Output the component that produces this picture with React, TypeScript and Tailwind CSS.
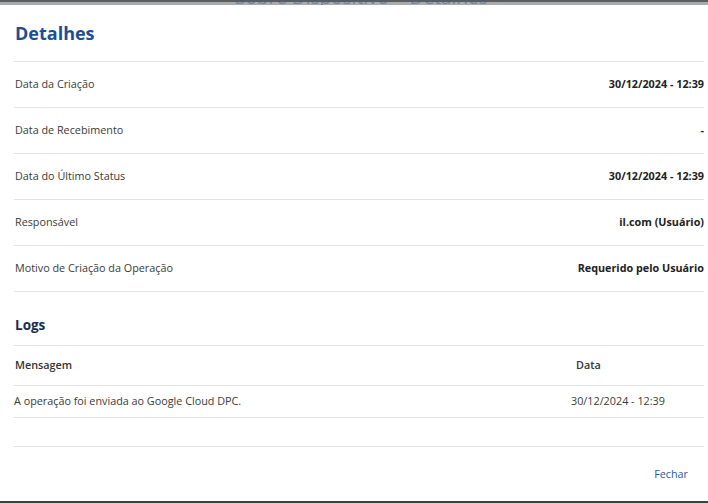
const rows: [string, string][] = [
  ["Data da Criação", "30/12/2024 - 12:39"],
  ["Data de Recebimento", "-"],
  ["Data do Último Status", "30/12/2024 - 12:39"],
  ["Responsável", "il.com (Usuário)"],
  ["Motivo de Criação da Operação", "Requerido pelo Usuário"],
];

export default function App() {
  return (
    <div
      className="flex h-[503px] w-[708px] flex-col overflow-hidden bg-[#3f4244] text-[#333]"
      style={{ fontFamily: '"Open Sans", "Noto Sans", sans-serif' }}
    >
      {/* backdrop strip above the dialog */}
      <div className="h-[2px] bg-[#5a5d60]" />
      <div className="relative h-[3px] overflow-hidden bg-[#a9abad]">
        <span className="absolute left-[235px] top-[-14px] whitespace-nowrap text-[19px] leading-none text-[#6f86a8]">
          Sobre Dispositivo &gt; Detalhes
        </span>
      </div>

      <div className="flex h-[496px] flex-col bg-white pl-[14px] pr-[4px]">
        <div className="flex h-[56px] items-center">
          <h1 className="pl-px text-[18px] font-bold text-[#1d4e93]">Detalhes</h1>
        </div>

        <div className="border-t border-[#e2e2e2]">
          {rows.map(([label, value]) => (
            <div
              key={label}
              className="flex h-[46px] items-center justify-between border-b border-[#e2e2e2] text-[10.8px]"
            >
              <span className="pl-px text-[#3a3a3a]">{label}</span>
              <span className="font-bold text-[#222]">{value}</span>
            </div>
          ))}
        </div>

        <div className="flex h-[53px] items-end pb-[10px]">
          <h2 className="pl-px text-[13.5px] font-bold leading-[19px] text-[#1b2d4f]">Logs</h2>
        </div>

        <div className="border-t border-[#e2e2e2] text-[10.8px]">
          <div className="flex h-[40px] items-center border-b border-[#e2e2e2] font-semibold text-[#333]">
            <span className="w-[557px] pl-px">Mensagem</span>
            <span className="pl-[5px]">Data</span>
          </div>
          <div className="flex h-[32px] items-center border-b border-[#e2e2e2] text-[#3a3a3a]">
            <span className="w-[557px]">A operação foi enviada ao Google Cloud DPC.</span>
            <span>30/12/2024 - 12:39</span>
          </div>
          <div className="h-[29px] border-b border-[#e2e2e2]" />
        </div>

        <div className="flex flex-1 items-center justify-end pr-[16px]">
          <button className="text-[10.8px] text-[#2659a8]">Fechar</button>
        </div>
      </div>
    </div>
  );
}
